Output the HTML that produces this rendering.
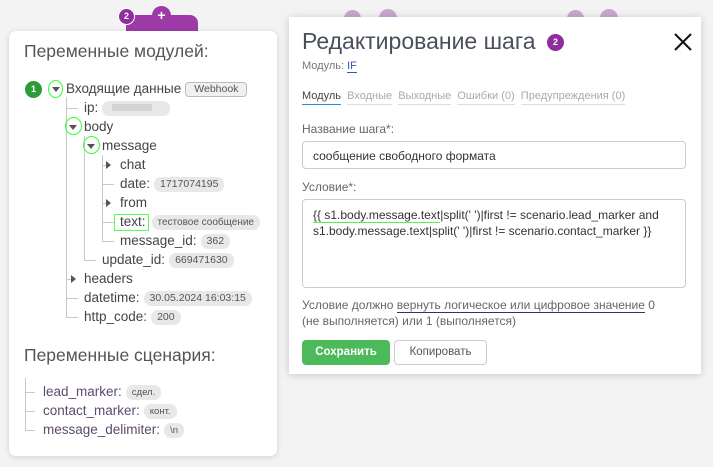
<!DOCTYPE html>
<html><head><meta charset="utf-8"><style>
*{margin:0;padding:0;box-sizing:border-box}
body{width:713px;height:467px;overflow:hidden;background:#f3f3f3;font-family:"Liberation Sans","Noto Sans CJK SC",sans-serif;position:relative;color:#444}
.a{position:absolute;white-space:nowrap}
.c{position:absolute;border-radius:50%;color:#fff;font-size:9px;font-weight:bold;text-align:center}
#L{position:absolute;left:9px;top:31px;width:268px;height:425px;background:#fff;border-radius:7px;box-shadow:0 1px 6px rgba(0,0,0,.15)}
#R{position:absolute;left:289px;top:17px;width:412px;height:357px;background:#fff;box-shadow:0 1px 8px rgba(0,0,0,.18)}
.t{font-size:13.5px;color:#444;transform:translateY(-50%);line-height:16px}
.b{display:inline-block;vertical-align:middle;margin-left:4px;background:#e8e8e8;border-radius:7px;font-size:10.5px;color:#555;height:15px;line-height:15px;padding:0 6px}
.v{position:absolute;width:1px;background:#c8c8c8}
.h{position:absolute;height:1px;background:#c8c8c8}
.tri{position:absolute;width:0;height:0;border-left:4px solid transparent;border-right:4px solid transparent;border-top:5px solid #555}
.trr{position:absolute;width:0;height:0;border-top:4px solid transparent;border-bottom:4px solid transparent;border-left:5px solid #555}
.g{position:absolute;border:1.5px solid #3f3;border-radius:50%}
.s{color:#5d4a6e}
</style></head><body>
<div class="c" style="left:344px;top:10px;width:17px;height:17px;background:#c9a6cf"></div>
<div class="c" style="left:379px;top:9px;width:18px;height:18px;background:#c9a6cf"></div>
<div class="c" style="left:567px;top:10px;width:17px;height:17px;background:#c9a6cf"></div>
<div class="c" style="left:600px;top:9px;width:18px;height:18px;background:#c9a6cf"></div>
<div class="a" style="left:126px;top:15px;width:72px;height:17px;background:#9d3aa8;border-radius:8px 8px 0 0"></div>
<div class="c" style="left:118px;top:8px;width:17px;height:17px;background:#8e2e9c;border:1.5px solid #fff;line-height:14px">2</div>
<div class="c" style="left:152px;top:6px;width:19px;height:19px;background:#9d3aa8;font-size:14px;line-height:18px">+</div>
<div id="L"></div>
<div class="a" style="left:24px;top:41px;font-size:17.5px;color:#555">Переменные модулей:</div>
<div class="c" style="left:25px;top:81px;width:17px;height:17px;background:#2e9b3b;line-height:17px">1</div>
<div class="v" style="left:66px;top:97px;height:221px"></div>
<div class="v" style="left:84px;top:136px;height:125px"></div>
<div class="v" style="left:102px;top:155px;height:87px"></div>
<div class="h" style="left:66px;top:108px;width:12px"></div>
<div class="h" style="left:66px;top:279px;width:5px"></div>
<div class="h" style="left:66px;top:298px;width:12px"></div>
<div class="h" style="left:66px;top:317px;width:12px"></div>
<div class="h" style="left:84px;top:260px;width:12px"></div>
<div class="h" style="left:102px;top:165px;width:5px"></div>
<div class="h" style="left:102px;top:184px;width:12px"></div>
<div class="h" style="left:102px;top:203px;width:5px"></div>
<div class="h" style="left:102px;top:222px;width:12px"></div>
<div class="h" style="left:102px;top:241px;width:12px"></div>
<div class="tri" style="left:52px;top:87px"></div><div class="g" style="left:48px;top:80px;width:15px;height:18px"></div>
<div class="tri" style="left:69px;top:125px"></div><div class="g" style="left:65px;top:117px;width:17px;height:18px"></div>
<div class="tri" style="left:87px;top:144px"></div><div class="g" style="left:83px;top:136px;width:17px;height:18px"></div>
<div class="trr" style="left:106px;top:161px"></div>
<div class="trr" style="left:106px;top:199px"></div>
<div class="trr" style="left:71px;top:275px"></div>
<div class="a t" style="left:66px;top:89px">Входящие данные<span class="b" style="background:#f0f0f0;border:1px solid #bbb;border-radius:4px;line-height:13px;padding:0 8px">Webhook</span></div>
<div class="a t" style="left:84px;top:108px">ip:<span class="b" style="width:68px"><span style="display:inline-block;width:40px;height:7px;background:#d4d4d4;margin-left:4px"></span></span></div>
<div class="a t" style="left:84px;top:127px">body</div>
<div class="a t" style="left:102px;top:146px">message</div>
<div class="a t" style="left:120px;top:165px">chat</div>
<div class="a t" style="left:120px;top:184px">date:<span class="b">1717074195</span></div>
<div class="a t" style="left:120px;top:203px">from</div>
<div class="a" style="left:114px;top:214px;width:35px;height:17px;border:1.5px solid #5f5"></div>
<div class="a t" style="left:120px;top:222px">text:<span class="b" style="font-size:10px;margin-left:6px">тестовое сообщение</span></div>
<div class="a t" style="left:120px;top:241px">message_id:<span class="b">362</span></div>
<div class="a t" style="left:102px;top:260px">update_id:<span class="b">669471630</span></div>
<div class="a t" style="left:84px;top:279px">headers</div>
<div class="a t" style="left:84px;top:298px">datetime:<span class="b">30.05.2024 16:03:15</span></div>
<div class="a t" style="left:84px;top:317px">http_code:<span class="b">200</span></div>
<div class="a" style="left:24px;top:345px;font-size:17.5px;color:#555">Переменные сценария:</div>
<div class="v" style="left:25px;top:378px;height:53px"></div>
<div class="h" style="left:25px;top:392px;width:10px"></div>
<div class="h" style="left:25px;top:411px;width:10px"></div>
<div class="h" style="left:25px;top:430px;width:10px"></div>
<div class="a t s" style="left:43px;top:392px">lead_marker:<span class="b" style="font-size:9.5px">сдел.</span></div>
<div class="a t s" style="left:43px;top:411px">contact_marker:<span class="b" style="font-size:9.5px">конт.</span></div>
<div class="a t s" style="left:43px;top:430px">message_delimiter:<span class="b" style="font-size:9.5px">\n</span></div>
<div id="R"></div>
<div class="a" style="left:302px;top:28px;font-size:23px;color:#4a4f5c">Редактирование шага</div>
<div class="c" style="left:547px;top:34px;width:17px;height:17px;background:#8e2e9c;line-height:17px">2</div>
<svg class="a" style="left:674px;top:33px" width="18" height="18"><path d="M1 1L17 17M17 1L1 17" stroke="#111" stroke-width="2"/></svg>
<div class="a" style="left:302px;top:60px;font-size:11px;color:#777">Модуль: <span style="color:#35b;border-bottom:1px solid #35b">IF</span></div>
<div class="a" style="left:302px;top:90px;font-size:11px;color:#aaa">
<span style="color:#444;border-bottom:1.5px solid #2a8bd8;padding-bottom:2px">Модуль</span>&nbsp;
<span style="border-bottom:1px solid #ddd;padding-bottom:2px">Входные</span>&nbsp;
<span style="border-bottom:1px solid #ddd;padding-bottom:2px">Выходные</span>&nbsp;
<span style="border-bottom:1px solid #ddd;padding-bottom:2px">Ошибки (0)</span>&nbsp;
<span style="border-bottom:1px solid #ddd;padding-bottom:2px">Предупреждения (0)</span></div>
<div class="a" style="left:302px;top:122px;font-size:12px;color:#666">Название шага*:</div>
<div class="a" style="left:302px;top:141px;width:384px;height:28px;border:1px solid #ccc;border-radius:4px;font-size:12px;color:#333;padding:7px 10px">сообщение свободного формата</div>
<div class="a" style="left:302px;top:180px;font-size:12px;color:#666">Условие*:</div>
<div class="a" style="left:302px;top:199px;width:384px;height:89px;border:1px solid #ccc;border-radius:4px;font-size:12px;color:#333;padding:7px 10px;line-height:16px;white-space:normal"><span style="border-bottom:1.5px solid #5e5">{{ s1.body.message.text</span>|split(' ')|first != scenario.lead_marker and s1.body.message.text|split(' ')|first != scenario.contact_marker }}</div>
<div class="a" style="left:302px;top:297px;font-size:12px;color:#666;line-height:16px">Условие должно <span style="border-bottom:1px solid #336">вернуть логическое или цифровое значение</span> 0<br>(не выполняется) или 1 (выполняется)</div>
<div class="a" style="left:302px;top:340px;width:88px;height:25px;background:#4cb95a;border-radius:4px;color:#fff;font-size:11.5px;font-weight:bold;text-align:center;line-height:25px">Сохранить</div>
<div class="a" style="left:394px;top:340px;width:93px;height:25px;border:1px solid #ccc;border-radius:4px;color:#555;font-size:11.5px;text-align:center;line-height:23px">Копировать</div>
</body></html>
